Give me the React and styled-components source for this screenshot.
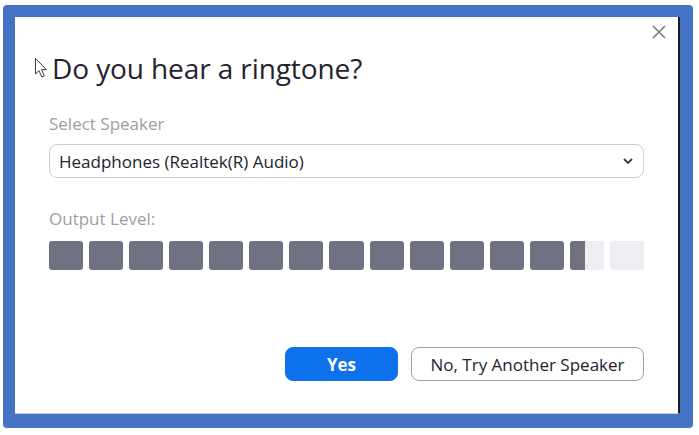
import styled, { createGlobalStyle } from "styled-components";

const GlobalStyle = createGlobalStyle`
  html, body {
    margin: 0;
    background: #ffffff;
  }
  body {
    font-family: "Segoe UI", "Open Sans", "Noto Sans", sans-serif;
  }
`;

const Frame = styled.div`
  margin: 5px 0 0 3px;
  width: 690px;
  height: 423px;
  box-sizing: border-box;
  background: #4472c4;
  border-radius: 4px;
  padding: 12px 13px 14px 12px;
`;

const Dialog = styled.div`
  position: relative;
  height: 100%;
  box-sizing: border-box;
  background: #ffffff;
  border-right: 2px solid #1c1c22;
  border-bottom: 1px solid #c9c9cf;
  padding: 0 34px 0 34px;
  display: flex;
  flex-direction: column;
`;

const CloseButton = styled.button`
  position: absolute;
  top: 4px;
  right: 8px;
  width: 22px;
  height: 22px;
  padding: 0;
  border: none;
  background: none;
  cursor: pointer;
  display: flex;
  align-items: center;
  justify-content: center;
`;

const TitleRow = styled.div`
  display: flex;
  align-items: center;
  margin-top: 32px;
  margin-left: -15px;
  gap: 3px;
`;

const Title = styled.h1`
  margin: 0;
  font-size: 28px;
  line-height: 38px;
  font-weight: 400;
  color: #23232e;
  letter-spacing: -0.1px;
`;

const Label = styled.div`
  font-size: 17px;
  line-height: 22px;
  color: #9d9da3;
  margin-top: ${(p) => p.top}px;
`;

const Select = styled.div`
  margin-top: 9px;
  height: 34px;
  box-sizing: border-box;
  border: 1px solid #cdcbdc;
  border-radius: 8px;
  display: flex;
  align-items: center;
  justify-content: space-between;
  padding: 0 9px 0 9px;
  font-size: 17px;
  color: #23232e;
`;

const Meter = styled.div`
  margin-top: 11px;
  display: grid;
  grid-template-columns: repeat(15, 1fr);
  gap: 6px;
`;

const Bar = styled.div`
  height: 29px;
  border-radius: 3px;
  background: #eeeef2;
  overflow: hidden;
`;

const BarFill = styled.div`
  height: 100%;
  background: #717184;
`;

const Actions = styled.div`
  margin-top: auto;
  margin-bottom: 32px;
  display: flex;
  justify-content: flex-end;
  gap: 13px;
`;

const Button = styled.button`
  height: 34px;
  box-sizing: border-box;
  border-radius: 8px;
  font-family: inherit;
  font-size: 17px;
  cursor: pointer;
  padding: 0;
  background: ${(p) => (p.primary ? "#0e72ed" : "#ffffff")};
  color: ${(p) => (p.primary ? "#ffffff" : "#23232e")};
  border: 1px solid ${(p) => (p.primary ? "#0e72ed" : "#a3a3a8")};
  font-weight: ${(p) => (p.primary ? 700 : 400)};
  width: ${(p) => p.w}px;
`;

const levels = [1, 1, 1, 1, 1, 1, 1, 1, 1, 1, 1, 1, 1, 0.45, 0];

export default function App() {
  return (
    <>
      <GlobalStyle />
      <Frame>
        <Dialog>
          <CloseButton aria-label="Close">
            <svg width="16" height="16" viewBox="0 0 16 16">
              <path d="M2 2 L14 14 M14 2 L2 14" stroke="#7b7b88" strokeWidth="1.6" />
            </svg>
          </CloseButton>
          <TitleRow>
            <svg width="15" height="22" viewBox="0 0 15 22">
              <path
                d="M1.5 1.5 L1.5 17 L5 13.6 L7.8 20 L10.3 19 L7.6 12.7 L12.5 12.7 Z"
                fill="#ffffff"
                stroke="#3a3a3a"
                strokeWidth="1"
                strokeLinejoin="round"
              />
            </svg>
            <Title>Do you hear a ringtone?</Title>
          </TitleRow>
          <Label top={26}>Select Speaker</Label>
          <Select>
            <span>Headphones (Realtek(R) Audio)</span>
            <svg width="12" height="8" viewBox="0 0 12 8">
              <path d="M2 2 L6 6 L10 2" fill="none" stroke="#3a3a44" strokeWidth="1.8" />
            </svg>
          </Select>
          <Label top={30}>Output Level:</Label>
          <Meter>
            {levels.map((l, i) => (
              <Bar key={i}>
                <BarFill style={{ width: `${l * 100}%` }} />
              </Bar>
            ))}
          </Meter>
          <Actions>
            <Button primary w={113}>Yes</Button>
            <Button w={233}>No, Try Another Speaker</Button>
          </Actions>
        </Dialog>
      </Frame>
    </>
  );
}
